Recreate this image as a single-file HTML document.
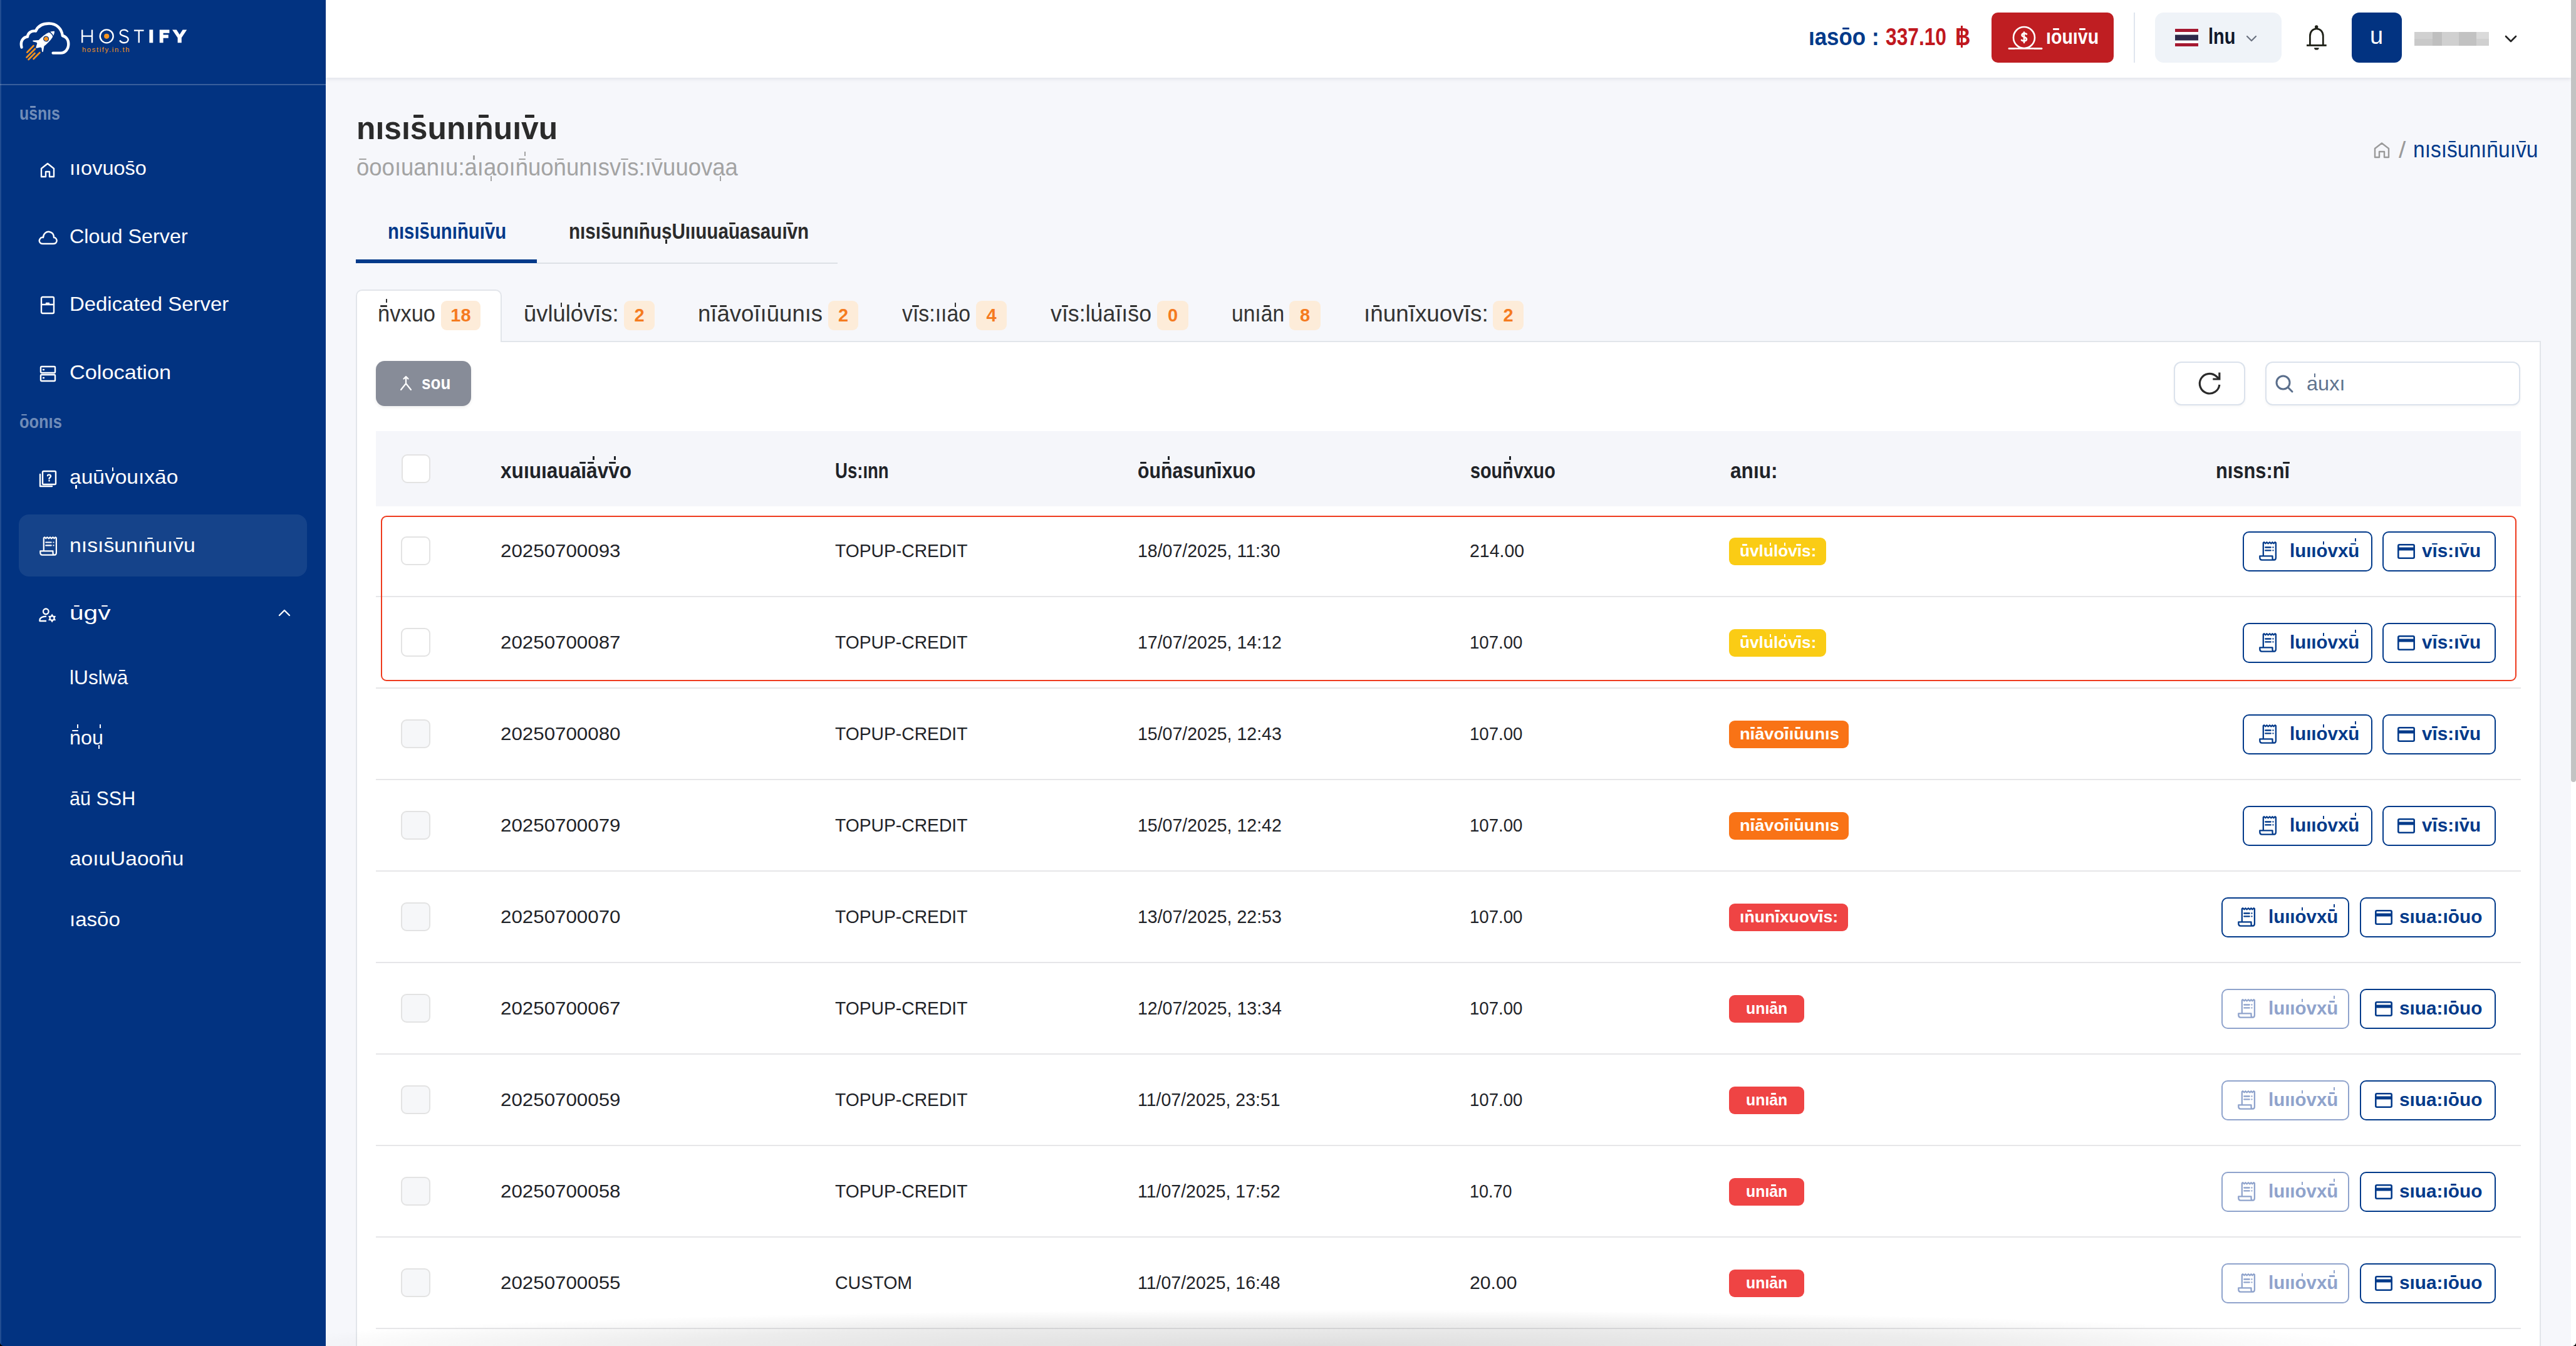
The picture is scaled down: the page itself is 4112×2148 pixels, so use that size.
<!DOCTYPE html>
<html><head><meta charset="utf-8"><title>Hostify - Billing</title>
<style>
html,body{margin:0;padding:0;}
body{width:4112px;height:2148px;overflow:hidden;position:relative;background:#f6f7fb;font-family:"Liberation Sans",sans-serif;}
.t{position:absolute;line-height:1;white-space:pre;transform-origin:0 0;}
.bn{position:absolute;text-align:center;font-size:29px;font-weight:700;}
svg{overflow:visible}
div{box-sizing:border-box}
</style></head><body>
<div style="position:absolute;left:0px;top:0px;width:520px;height:2148px;background:#023381"></div>
<div style="position:absolute;left:0px;top:134px;width:520px;height:2px;background:rgba(255,255,255,0.22)"></div>
<div style="position:absolute;left:520px;top:0px;width:3584px;height:124px;background:#fff;box-shadow:0 2px 6px rgba(30,40,60,0.10)"></div>
<div style="position:absolute;left:4104px;top:0px;width:8px;height:2148px;background:#fff"></div>
<div style="position:absolute;left:4104px;top:0px;width:8px;height:1248px;background:#c3c3c3;border-radius:0 0 4px 4px"></div>
<svg style="position:absolute;left:0px;top:0px;" width="320" height="110" viewBox="0 0 320 110" fill="none">
<path d="M34.5 75.5 C32 66 36.5 59.5 44 58.5 C44.5 52.5 50 48.5 57 49.5 C60.5 41.5 68.5 37.5 78.2 37.5 C90.5 37.5 98.5 46 99.8 57 C105.5 58.5 109.3 63.5 109.3 70 C109.3 78.5 104 84.6 97 84.6 L84.6 84.6" stroke="#fff" stroke-width="4.4" stroke-linecap="round" stroke-linejoin="round"/>
<g transform="translate(72.5,63) rotate(-42)">
<path d="M19.5 0 C13 -7.5 -6 -7.5 -14 -5.5 L-14 5.5 C-6 7.5 13 7.5 19.5 0 Z" fill="#fff"/>
<path d="M12 -5.6 C14 -3 14 3 12 5.6" stroke="#023381" stroke-width="1.4"/>
<circle cx="1.5" cy="0" r="4.6" fill="#023381"/>
<circle cx="1.5" cy="0" r="3.4" fill="#f7931e"/>
<path d="M-9 -5.5 L-16 -11 L-12 -5.5 Z M-9 5.5 L-16 11 L-12 5.5 Z" fill="#fff" stroke="#fff" stroke-width="2" stroke-linejoin="round"/>
<path d="M-14 -3 L-19 0 L-14 3 Z" fill="#fff" stroke="#fff" stroke-width="2" stroke-linejoin="round"/>
</g>
<path d="M43.3 83.5 L53.5 73 M42.5 91.5 L56 78 M45.5 95 L55.5 85 M53.5 94 L63.5 84" stroke="#f7931e" stroke-width="2.6" stroke-linecap="round"/>
<path d="M131.2 47.4 V68.3 M147 47.4 V68.3 M131.2 57.6 H147" stroke="#fff" stroke-width="2.4"/>
<circle cx="170.2" cy="57.85" r="10.5" stroke="#fff" stroke-width="2.4"/>
<circle cx="170.2" cy="57.8" r="4.1" fill="#f7931e"/>
<path d="M204.2 51 C203 48.8 200.5 47.6 198 47.6 C194 47.6 191.8 50 191.8 52.8 C191.8 59 204.7 56 204.7 62.8 C204.7 66 202 68.2 198 68.2 C195 68.2 192.4 66.8 191.2 64.4" stroke="#fff" stroke-width="2.4" stroke-linecap="butt"/>
<path d="M213.9 48.6 H229.6 M221.75 48.6 V68.3" stroke="#fff" stroke-width="2.4"/>
<rect x="238.4" y="47.4" width="5.9" height="20.9" fill="#fff"/>
<path d="M254.7 47.4 H270.4 V52.8 H260.6 V55.6 H268.8 V60.8 H260.6 V68.3 H254.7 Z" fill="#fff"/>
<path d="M275 47.4 H281.8 L286.7 55.2 L291.6 47.4 H298.3 L289.8 60.2 V68.3 H283.6 V60.2 Z" fill="#fff"/>
</svg>
<div class="t" style="left:130.6px;top:74.2px;font-size:11px;letter-spacing:1.6px;color:#f7931e;transform:scaleX(1.0201);">hostify.in.th</div>
<div class="t" style="left:31.0px;top:165.6px;font-size:30px;font-weight:700;color:rgba(255,255,255,0.45);transform:scaleX(0.8269);">usnıs</div><div style="position:absolute;left:48.4px;top:168.7px;width:9.0px;height:2.9px;background:rgba(255,255,255,0.45);border-radius:1px"></div>
<div class="t" style="left:31.0px;top:657.6px;font-size:30px;font-weight:700;color:rgba(255,255,255,0.45);transform:scaleX(0.8481);">oonıs</div><div style="position:absolute;left:34.1px;top:660.6px;width:9.0px;height:2.9px;background:rgba(255,255,255,0.45);border-radius:1px"></div>
<div class="t" style="left:111.0px;top:252.4px;font-size:32px;color:#fff;transform:scaleX(1.0164);">ııovuoso</div><div style="position:absolute;left:203.8px;top:256.5px;width:9.6px;height:2.2px;background:#fff;border-radius:1px"></div>
<div class="t" style="left:111.0px;top:360.9px;font-size:32px;color:#fff;transform:scaleX(1.0106);">Cloud Server</div>
<div class="t" style="left:111.0px;top:468.9px;font-size:32px;color:#fff;transform:scaleX(1.0281);">Dedicated Server</div>
<div class="t" style="left:111.0px;top:577.9px;font-size:32px;color:#fff;transform:scaleX(1.0724);">Colocation</div>
<div class="t" style="left:111.0px;top:745.4px;font-size:32px;color:#fff;transform:scaleX(1.0479);">auuvouıxao</div><div style="position:absolute;left:120.4px;top:773.5px;width:2.2px;height:6.4px;background:#fff"></div><div style="position:absolute;left:153.4px;top:749.5px;width:9.6px;height:2.2px;background:#fff;border-radius:1px"></div><div style="position:absolute;left:178.5px;top:745.6px;width:2.2px;height:6.1px;background:#fff"></div><div style="position:absolute;left:252.9px;top:749.5px;width:9.6px;height:2.2px;background:#fff;border-radius:1px"></div>
<div style="position:absolute;left:30px;top:821px;width:460px;height:99px;background:rgba(255,255,255,0.08);border-radius:16px"></div>
<div class="t" style="left:111.0px;top:853.9px;font-size:32px;color:#fff;transform:scaleX(1.0552);">nısısunınuıvu</div><div style="position:absolute;left:169.5px;top:858.0px;width:9.6px;height:2.2px;background:#fff;border-radius:1px"></div><div style="position:absolute;left:234.9px;top:858.0px;width:9.6px;height:2.2px;background:#fff;border-radius:1px"></div><div style="position:absolute;left:281.4px;top:858.0px;width:9.6px;height:2.2px;background:#fff;border-radius:1px"></div>
<div class="t" style="left:111.0px;top:961.9px;font-size:32px;color:#fff;transform:scaleX(1.2692);">ugv</div><div style="position:absolute;left:117.6px;top:966.0px;width:9.6px;height:2.2px;background:#fff;border-radius:1px"></div><div style="position:absolute;left:162.0px;top:966.0px;width:9.6px;height:2.2px;background:#fff;border-radius:1px"></div>
<div class="t" style="left:111.0px;top:1064.9px;font-size:32px;color:#fff;transform:scaleX(0.9894);">lUslwa</div><div style="position:absolute;left:190.3px;top:1069.0px;width:9.6px;height:2.2px;background:#fff;border-radius:1px"></div>
<div class="t" style="left:111.0px;top:1160.9px;font-size:32px;color:#fff;transform:scaleX(1.0111);">nou</div><div style="position:absolute;left:115.3px;top:1165.0px;width:9.6px;height:2.2px;background:#fff;border-radius:1px"></div><div style="position:absolute;left:122.7px;top:1155.7px;width:2.2px;height:6.1px;background:#fff"></div><div style="position:absolute;left:156.5px;top:1189.0px;width:2.2px;height:6.4px;background:#fff"></div><div style="position:absolute;left:159.1px;top:1155.7px;width:2.2px;height:6.1px;background:#fff"></div>
<div class="t" style="left:111.0px;top:1258.4px;font-size:32px;color:#fff;transform:scaleX(0.9545);">au SSH</div><div style="position:absolute;left:114.8px;top:1262.5px;width:9.6px;height:2.2px;background:#fff;border-radius:1px"></div><div style="position:absolute;left:132.0px;top:1262.5px;width:9.6px;height:2.2px;background:#fff;border-radius:1px"></div>
<div class="t" style="left:111.0px;top:1353.9px;font-size:32px;color:#fff;transform:scaleX(1.0455);">aoıuUaoonu</div><div style="position:absolute;left:262.0px;top:1358.0px;width:9.6px;height:2.2px;background:#fff;border-radius:1px"></div>
<div class="t" style="left:111.0px;top:1450.9px;font-size:32px;color:#fff;transform:scaleX(1.0329);">ıasoo</div><div style="position:absolute;left:159.9px;top:1455.0px;width:9.6px;height:2.2px;background:#fff;border-radius:1px"></div>
<svg style="position:absolute;left:64px;top:259px;" width="24" height="25" viewBox="0 0 24 25" fill="none"><path d="M2 23 V10 L12 2 L22 10 V23 H15 V15 H9 V23 Z" stroke="#fff" stroke-width="2.4" stroke-linecap="round" stroke-linejoin="round"/></svg>
<svg style="position:absolute;left:60px;top:367px;" width="32" height="24" viewBox="0 0 32 24" fill="none"><path d="M8 22 C3 22 1.5 17 4 14 C5 12 7 11.5 9 12 C9 6 14 2 19 3 C24 4 26 8 26 12 C29 12 31 15 30.5 18 C30 20.5 28 22 25 22 Z" stroke="#fff" stroke-width="2.4" stroke-linecap="round" stroke-linejoin="round"/></svg>
<svg style="position:absolute;left:64px;top:472px;" width="24" height="30" viewBox="0 0 24 30" fill="none"><rect x="2" y="2" width="20" height="26" rx="2" stroke="#fff" stroke-width="2.4" stroke-linecap="round" stroke-linejoin="round"/><path d="M2 14 H22 M10 14 V12 H14 V14" stroke="#fff" stroke-width="2.4" stroke-linecap="round" stroke-linejoin="round"/></svg>
<svg style="position:absolute;left:63px;top:583px;" width="27" height="27" viewBox="0 0 27 27" fill="none"><rect x="2" y="2" width="23" height="10" rx="1.5" stroke="#fff" stroke-width="2.4" stroke-linecap="round" stroke-linejoin="round"/><rect x="2" y="15" width="23" height="10" rx="1.5" stroke="#fff" stroke-width="2.4" stroke-linecap="round" stroke-linejoin="round"/><path d="M6 7 H7 M6 20 H7" stroke="#fff" stroke-width="2.4" stroke-linecap="round" stroke-linejoin="round"/></svg>
<svg style="position:absolute;left:61px;top:750px;" width="30" height="29" viewBox="0 0 30 29" fill="none"><rect x="7" y="2" width="21" height="21" rx="1.5" stroke="#fff" stroke-width="2.4" stroke-linecap="round" stroke-linejoin="round"/><path d="M3 7 V26 H22" stroke="#fff" stroke-width="2.4" stroke-linecap="round" stroke-linejoin="round"/><path d="M15 9 C15 7 20 7 20 10 C20 12 17.5 12 17.5 14 M17.5 17 V17.2" stroke="#fff" stroke-width="2.4" stroke-linecap="round" stroke-linejoin="round"/></svg>
<svg style="position:absolute;left:62px;top:855px;" width="30" height="32" viewBox="0 0 30 32" fill="none"><path d="M7.8 24.3 V3.3 L9.2 2.3 L11.2 4.3 L13.4 2.3 L15.6 4.3 L18 2.3 L20.3 4.3 L22.4 2.3 L24.5 4.3 L26.5 2.3 L27.9 3.3 V27 C27.9 29.2 26.6 30.6 25 30.6 C23.4 30.6 22.5 29.2 22.5 27.5 V24.3 H2.3 V27 C2.3 29.2 3.7 30.6 5.5 30.6 H25" stroke="#fff" stroke-width="2.2" stroke-linecap="round" stroke-linejoin="round"/><path d="M11.2 10.5 H19.7 M11.2 15.4 H19.7 M23.4 10.5 H23.5 M23.4 15.4 H23.5" stroke="#fff" stroke-width="2.2" stroke-linecap="round"/></svg>
<svg style="position:absolute;left:55px;top:960px;" width="45" height="40" viewBox="0 0 45 40" fill="none"><circle cx="18.3" cy="15.8" r="4.3" stroke="#fff" stroke-width="2.3"/><path d="M19 23.6 C12.5 23.8 8.4 26 8.4 29.8 V31 H19" stroke="#fff" stroke-width="2.3" stroke-linejoin="round"/><polygon points="28.10,19.60 30.25,22.78 34.08,23.05 32.40,26.50 34.08,29.95 30.25,30.22 28.10,33.40 25.95,30.22 22.12,29.95 23.80,26.50 22.12,23.05 25.95,22.78" fill="#fff"/><circle cx="28.1" cy="26.5" r="2.3" fill="#023381"/></svg>
<svg style="position:absolute;left:444px;top:971px;" width="20" height="14" viewBox="0 0 20 14" fill="none"><path d="M2 11 L10 3 L18 11" stroke="#fff" stroke-width="2.4" stroke-linecap="round" stroke-linejoin="round"/></svg>
<div class="t" style="left:2887.0px;top:39.8px;font-size:38px;font-weight:700;color:#023a8a;transform:scaleX(0.9187);">ıasoo :</div><div style="position:absolute;left:2940.6px;top:43.7px;width:11.4px;height:3.6px;background:#023a8a;border-radius:1px"></div>
<div class="t" style="left:3010.0px;top:39.8px;font-size:38px;font-weight:700;color:#c0181f;transform:scaleX(0.8346);">337.10 </div>
<div class="t" style="left:3121.0px;top:39.8px;font-size:38px;font-weight:700;color:#c0181f;transform:scaleX(0.8889);">B</div>
<div style="position:absolute;left:3130px;top:41px;width:3px;height:35px;background:#c0181f"></div>
<div style="position:absolute;left:3179px;top:20px;width:195px;height:80px;background:#bf1e22;border-radius:10px"></div>
<svg style="position:absolute;left:3204px;top:40px;" width="58" height="40" viewBox="0 0 58 40" fill="none"><circle cx="27" cy="20" r="17" stroke="#fff" stroke-width="2.6"/><path d="M3 37.5 H55" stroke="#fff" stroke-width="2.6" stroke-linecap="round"/><rect x="12" y="37" width="31" height="3" fill="#bf1e22"/><path d="M3 37.5 H55" stroke="#fff" stroke-width="2.6" stroke-linecap="round"/><path d="M31 14.5 C30 13 24 12.5 23.5 16 C23 19.5 31 18.5 31 22.5 C31 26 25 26 23 24 M27 11.5 V28" stroke="#fff" stroke-width="2.6" stroke-linecap="round"/></svg>
<div class="t" style="left:3266.0px;top:41.0px;font-size:34px;font-weight:700;color:#fff;transform:scaleX(0.8400);">ıouıvu</div><div style="position:absolute;left:3277.3px;top:44.5px;width:10.2px;height:3.2px;background:#fff;border-radius:1px"></div><div style="position:absolute;left:3319.3px;top:44.5px;width:10.2px;height:3.2px;background:#fff;border-radius:1px"></div>
<div style="position:absolute;left:3406px;top:20px;width:2px;height:80px;background:#dfe5ef"></div>
<div style="position:absolute;left:3440px;top:20px;width:202px;height:80px;background:#eff3f8;border-radius:14px"></div>
<svg style="position:absolute;left:3472px;top:46px;" width="37" height="28" viewBox="0 0 37 28" fill="none"><rect y="0" width="37" height="28" fill="#fff"/><rect y="0" width="37" height="5" fill="#a51931"/><rect y="23" width="37" height="5" fill="#a51931"/><rect y="9.5" width="37" height="9" fill="#2d2a4a"/></svg>
<div class="t" style="left:3525.0px;top:40.4px;font-size:35px;font-weight:700;color:#0f172a;transform:scaleX(0.8269);">lnu</div>
<svg style="position:absolute;left:3584px;top:54px;" width="20" height="14" viewBox="0 0 20 14" fill="none"><path d="M3 4 L10 11 L17 4" stroke="#6b7280" stroke-width="2.2" stroke-linecap="round" stroke-linejoin="round"/></svg>
<svg style="position:absolute;left:3670px;top:30px;" width="60" height="60" viewBox="0 0 60 60" fill="none"><path d="M17.4 41.5 V27.5 C17.4 20.3 22 15.8 27.8 15.8 C33.6 15.8 38.3 20.3 38.3 27.5 V41.5" stroke="#1f2118" stroke-width="2.8"/><path d="M12 42.4 H43.7" stroke="#1f2118" stroke-width="2.9"/><circle cx="27.7" cy="12.9" r="2.7" fill="#1f2118"/><path d="M24 46.2 H31.7 A3.85 3.4 0 0 1 24 46.2 Z" fill="#1f2118"/></svg>
<div style="position:absolute;left:3754px;top:20px;width:80px;height:80px;background:#023381;border-radius:12px"></div>
<div class="t" style="left:3783.0px;top:37.8px;font-size:38px;color:#fff;">u</div>
<div style="position:absolute;left:3854px;top:51px;width:119px;height:22px;background:#d0d0d0"></div>
<div style="position:absolute;left:3883px;top:51px;width:15px;height:22px;background:#bfbfbf"></div>
<div style="position:absolute;left:3925px;top:51px;width:28px;height:22px;background:#c2c2c2"></div>
<div style="position:absolute;left:3854px;top:62px;width:29px;height:11px;background:#c9c9c9"></div>
<div style="position:absolute;left:3953px;top:51px;width:20px;height:11px;background:#dadada"></div>
<svg style="position:absolute;left:3997px;top:54px;" width="22" height="16" viewBox="0 0 22 16" fill="none"><path d="M3 4 L11 12 L19 4" stroke="#222" stroke-width="2.6" stroke-linecap="round" stroke-linejoin="round"/></svg>
<div class="t" style="left:569.0px;top:178.0px;font-size:52px;font-weight:700;color:#2b2b2b;transform:scaleX(0.9582);">nısısunınuıvu</div><div style="position:absolute;left:660.4px;top:183.3px;width:15.6px;height:4.9px;background:#2b2b2b;border-radius:1px"></div><div style="position:absolute;left:764.3px;top:183.3px;width:15.6px;height:4.9px;background:#2b2b2b;border-radius:1px"></div><div style="position:absolute;left:837.6px;top:183.3px;width:15.6px;height:4.9px;background:#2b2b2b;border-radius:1px"></div>
<div class="t" style="left:569.0px;top:247.8px;font-size:38px;color:#a3a3a3;transform:scaleX(0.9606);">oooıuanıu:aıaoınuonunısvıs:ıvuuovaa</div><div style="position:absolute;left:573.4px;top:252.6px;width:11.4px;height:2.7px;background:#a3a3a3;border-radius:1px"></div><div style="position:absolute;left:755.0px;top:248.1px;width:2.7px;height:7.2px;background:#a3a3a3"></div><div style="position:absolute;left:782.7px;top:281.1px;width:2.7px;height:7.6px;background:#a3a3a3"></div><div style="position:absolute;left:828.0px;top:252.6px;width:11.4px;height:2.7px;background:#a3a3a3;border-radius:1px"></div><div style="position:absolute;left:836.7px;top:241.6px;width:2.7px;height:7.2px;background:#a3a3a3"></div><div style="position:absolute;left:888.5px;top:252.6px;width:11.4px;height:2.7px;background:#a3a3a3;border-radius:1px"></div><div style="position:absolute;left:991.3px;top:252.6px;width:11.4px;height:2.7px;background:#a3a3a3;border-radius:1px"></div><div style="position:absolute;left:1045.1px;top:252.6px;width:11.4px;height:2.7px;background:#a3a3a3;border-radius:1px"></div><div style="position:absolute;left:1148.7px;top:281.1px;width:2.7px;height:7.6px;background:#a3a3a3"></div>
<svg style="position:absolute;left:3788px;top:226px;" width="28" height="27" viewBox="0 0 28 27" fill="none"><path d="M3 25 V11 L14 2.5 L25 11 V25 H18 V16 H10 V25 Z" stroke="#9a9a9a" stroke-width="2.4" stroke-linejoin="round"/></svg>
<div class="t" style="left:3829.0px;top:221.2px;font-size:37px;color:#9a9a9a;transform:scaleX(1.1000);">/</div>
<div class="t" style="left:3852.0px;top:220.2px;font-size:37px;color:#023a8a;transform:scaleX(0.9058);">nısısunınuıvu</div><div style="position:absolute;left:3909.4px;top:224.9px;width:11.1px;height:2.6px;background:#023a8a;border-radius:1px"></div><div style="position:absolute;left:3974.6px;top:224.9px;width:11.1px;height:2.6px;background:#023a8a;border-radius:1px"></div><div style="position:absolute;left:4020.8px;top:224.9px;width:11.1px;height:2.6px;background:#023a8a;border-radius:1px"></div>
<div class="t" style="left:619.0px;top:351.4px;font-size:35px;font-weight:700;color:#023a8a;transform:scaleX(0.8386);">nısısunınuıvu</div><div style="position:absolute;left:672.0px;top:354.9px;width:10.5px;height:3.3px;background:#023a8a;border-radius:1px"></div><div style="position:absolute;left:732.4px;top:354.9px;width:10.5px;height:3.3px;background:#023a8a;border-radius:1px"></div><div style="position:absolute;left:775.2px;top:354.9px;width:10.5px;height:3.3px;background:#023a8a;border-radius:1px"></div>
<div class="t" style="left:908.0px;top:351.4px;font-size:35px;font-weight:700;color:#2b2b2b;transform:scaleX(0.8456);">nısısunınusUııuuauasauıvn</div><div style="position:absolute;left:961.5px;top:354.9px;width:10.5px;height:3.3px;background:#2b2b2b;border-radius:1px"></div><div style="position:absolute;left:1022.4px;top:354.9px;width:10.5px;height:3.3px;background:#2b2b2b;border-radius:1px"></div><div style="position:absolute;left:1062.3px;top:382.1px;width:3.1px;height:7.0px;background:#2b2b2b"></div><div style="position:absolute;left:1163.6px;top:354.9px;width:10.5px;height:3.3px;background:#2b2b2b;border-radius:1px"></div><div style="position:absolute;left:1255.0px;top:354.9px;width:10.5px;height:3.3px;background:#2b2b2b;border-radius:1px"></div>
<div style="position:absolute;left:568px;top:414px;width:289px;height:6px;background:#023a8a"></div>
<div style="position:absolute;left:857px;top:419px;width:480px;height:2px;background:#dde1e6"></div>
<div style="position:absolute;left:568px;top:544px;width:3488px;height:1756px;background:#fff;border:2px solid #e2e5ea;border-bottom:none"></div>
<div style="position:absolute;left:568px;top:462px;width:233px;height:84px;background:#fff;border:2px solid #e2e5ea;border-bottom:none;border-radius:10px 10px 0 0"></div>
<div class="t" style="left:603.0px;top:482.5px;font-size:36px;color:#333;transform:scaleX(0.9583);">nvxuo</div><div style="position:absolute;left:607.2px;top:487.1px;width:10.8px;height:2.5px;background:#333;border-radius:1px"></div><div style="position:absolute;left:615.5px;top:476.6px;width:2.5px;height:6.8px;background:#333"></div>
<div style="position:absolute;left:704px;top:480px;width:63px;height:47px;background:#fdecd9;border-radius:9px"></div>
<div class="bn" style="left:704px;width:63px;top:480px;height:47px;line-height:47px;color:#f57b1f">18</div>
<div class="t" style="left:835.5px;top:482.5px;font-size:36px;color:#333;transform:scaleX(1.0100);">uvlulovıs:</div><div style="position:absolute;left:840.2px;top:487.1px;width:10.8px;height:2.5px;background:#333;border-radius:1px"></div><div style="position:absolute;left:894.9px;top:482.8px;width:2.5px;height:6.8px;background:#333"></div><div style="position:absolute;left:923.2px;top:482.8px;width:2.5px;height:6.8px;background:#333"></div><div style="position:absolute;left:948.3px;top:487.1px;width:10.8px;height:2.5px;background:#333;border-radius:1px"></div>
<div style="position:absolute;left:996px;top:480px;width:49px;height:47px;background:#fdecd9;border-radius:9px"></div>
<div class="bn" style="left:996px;width:49px;top:480px;height:47px;line-height:47px;color:#f57b1f">2</div>
<div class="t" style="left:1114.0px;top:482.5px;font-size:36px;color:#333;transform:scaleX(1.0153);">nıavoııuunıs</div><div style="position:absolute;left:1134.0px;top:487.1px;width:10.8px;height:2.5px;background:#333;border-radius:1px"></div><div style="position:absolute;left:1149.2px;top:487.1px;width:10.8px;height:2.5px;background:#333;border-radius:1px"></div><div style="position:absolute;left:1203.0px;top:487.1px;width:10.8px;height:2.5px;background:#333;border-radius:1px"></div><div style="position:absolute;left:1228.4px;top:487.1px;width:10.8px;height:2.5px;background:#333;border-radius:1px"></div>
<div style="position:absolute;left:1322px;top:480px;width:48px;height:47px;background:#fdecd9;border-radius:9px"></div>
<div class="bn" style="left:1322px;width:48px;top:480px;height:47px;line-height:47px;color:#f57b1f">2</div>
<div class="t" style="left:1440.0px;top:482.5px;font-size:36px;color:#333;transform:scaleX(0.9397);">vıs:ııao</div><div style="position:absolute;left:1456.2px;top:487.1px;width:10.8px;height:2.5px;background:#333;border-radius:1px"></div><div style="position:absolute;left:1523.7px;top:482.8px;width:2.5px;height:6.8px;background:#333"></div>
<div style="position:absolute;left:1558px;top:480px;width:49px;height:47px;background:#fdecd9;border-radius:9px"></div>
<div class="bn" style="left:1558px;width:49px;top:480px;height:47px;line-height:47px;color:#f57b1f">4</div>
<div class="t" style="left:1677.0px;top:482.5px;font-size:36px;color:#333;transform:scaleX(0.9938);">vıs:luaııso</div><div style="position:absolute;left:1694.5px;top:487.1px;width:10.8px;height:2.5px;background:#333;border-radius:1px"></div><div style="position:absolute;left:1753.4px;top:482.8px;width:2.5px;height:6.8px;background:#333"></div><div style="position:absolute;left:1779.9px;top:487.1px;width:10.8px;height:2.5px;background:#333;border-radius:1px"></div><div style="position:absolute;left:1803.8px;top:487.1px;width:10.8px;height:2.5px;background:#333;border-radius:1px"></div>
<div style="position:absolute;left:1847px;top:480px;width:50px;height:47px;background:#fdecd9;border-radius:9px"></div>
<div class="bn" style="left:1847px;width:50px;top:480px;height:47px;line-height:47px;color:#f57b1f">0</div>
<div class="t" style="left:1966.0px;top:482.5px;font-size:36px;color:#333;transform:scaleX(0.9333);">unıan</div><div style="position:absolute;left:2016.6px;top:487.1px;width:10.8px;height:2.5px;background:#333;border-radius:1px"></div>
<div style="position:absolute;left:2058px;top:480px;width:50px;height:47px;background:#fdecd9;border-radius:9px"></div>
<div class="bn" style="left:2058px;width:50px;top:480px;height:47px;line-height:47px;color:#f57b1f">8</div>
<div class="t" style="left:2176.5px;top:482.5px;font-size:36px;color:#333;transform:scaleX(1.0232);">ınunıxuovıs:</div><div style="position:absolute;left:2191.6px;top:487.1px;width:10.8px;height:2.5px;background:#333;border-radius:1px"></div><div style="position:absolute;left:2247.8px;top:487.1px;width:10.8px;height:2.5px;background:#333;border-radius:1px"></div><div style="position:absolute;left:2335.8px;top:487.1px;width:10.8px;height:2.5px;background:#333;border-radius:1px"></div>
<div style="position:absolute;left:2383px;top:480px;width:49px;height:47px;background:#fdecd9;border-radius:9px"></div>
<div class="bn" style="left:2383px;width:49px;top:480px;height:47px;line-height:47px;color:#f57b1f">2</div>
<div style="position:absolute;left:600px;top:576px;width:152px;height:72px;background:#878c98;border-radius:14px;box-shadow:0 2px 5px rgba(0,0,0,0.08)"></div>
<svg style="position:absolute;left:636px;top:598px;" width="24" height="28" viewBox="0 0 24 28" fill="none"><path d="M12 3 V14 L4 24 M12 14 L20 24 M8.5 6.5 L12 3 L15.5 6.5" stroke="#fff" stroke-width="2.2" stroke-linecap="round" stroke-linejoin="round"/></svg>
<div class="t" style="left:673.0px;top:596.4px;font-size:30px;font-weight:700;color:#fff;transform:scaleX(0.8679);">sou</div>
<div style="position:absolute;left:3470px;top:577px;width:114px;height:70px;background:#fff;border:2px solid #dbe2ec;border-radius:12px;box-sizing:border-box;box-shadow:0 2px 4px rgba(0,0,0,0.04)"></div>
<svg style="position:absolute;left:3505.8px;top:590.9px;width:42.1px;height:42.1px" width="24" height="24" viewBox="0 0 24 24" fill="none"><path d="M21 13 a9 9 0 1 1 -3 -7.7 L21 8" stroke="#2b2b2b" stroke-width="1.8" stroke-linecap="butt" stroke-linejoin="miter"/><path d="M21 2 v6 h-6" stroke="#2b2b2b" stroke-width="1.8" stroke-linecap="butt" stroke-linejoin="miter"/></svg>
<div style="position:absolute;left:3616px;top:577px;width:407px;height:70px;background:#fff;border:2px solid #dbe2ec;border-radius:12px;box-sizing:border-box;box-shadow:0 2px 4px rgba(0,0,0,0.04)"></div>
<svg style="position:absolute;left:3631px;top:597px;" width="32" height="32" viewBox="0 0 32 32" fill="none"><circle cx="13.5" cy="13.5" r="10.5" stroke="#5b6f8c" stroke-width="3"/><path d="M21.5 21.5 L28 28" stroke="#5b6f8c" stroke-width="3" stroke-linecap="round"/></svg>
<div class="t" style="left:3682.0px;top:595.5px;font-size:32px;color:#61748f;transform:scaleX(1.0164);">auxı</div><div style="position:absolute;left:3693.7px;top:595.7px;width:2.2px;height:6.1px;background:#61748f"></div>
<div style="position:absolute;left:600px;top:688px;width:3424px;height:120px;background:#f5f6fa"></div>
<div style="position:absolute;left:641px;top:725px;width:46px;height:46px;background:#fff;border:2px solid #e3e3e3;border-radius:9px;box-sizing:border-box"></div>
<div class="t" style="left:799.0px;top:733.4px;font-size:35px;font-weight:700;color:#1f2328;transform:scaleX(0.9035);">xuıuıauaıavvo</div><div style="position:absolute;left:924.8px;top:736.9px;width:10.5px;height:3.3px;background:#1f2328;border-radius:1px"></div><div style="position:absolute;left:937.9px;top:736.9px;width:10.5px;height:3.3px;background:#1f2328;border-radius:1px"></div><div style="position:absolute;left:945.9px;top:727.6px;width:3.1px;height:6.7px;background:#1f2328"></div><div style="position:absolute;left:972.2px;top:736.9px;width:10.5px;height:3.3px;background:#1f2328;border-radius:1px"></div><div style="position:absolute;left:980.2px;top:727.6px;width:3.1px;height:6.7px;background:#1f2328"></div>
<div class="t" style="left:1333.0px;top:733.4px;font-size:35px;font-weight:700;color:#1f2328;transform:scaleX(0.7870);">Us:ınn</div>
<div class="t" style="left:1816.0px;top:733.4px;font-size:35px;font-weight:700;color:#1f2328;transform:scaleX(0.8645);">ounasunıxuo</div><div style="position:absolute;left:1819.8px;top:736.9px;width:10.5px;height:3.3px;background:#1f2328;border-radius:1px"></div><div style="position:absolute;left:1856.1px;top:736.9px;width:10.5px;height:3.3px;background:#1f2328;border-radius:1px"></div><div style="position:absolute;left:1864.2px;top:727.6px;width:3.1px;height:6.7px;background:#1f2328"></div><div style="position:absolute;left:1938.7px;top:736.9px;width:10.5px;height:3.3px;background:#1f2328;border-radius:1px"></div>
<div class="t" style="left:2347.0px;top:733.4px;font-size:35px;font-weight:700;color:#1f2328;transform:scaleX(0.8210);">sounvxuo</div><div style="position:absolute;left:2400.5px;top:736.9px;width:10.5px;height:3.3px;background:#1f2328;border-radius:1px"></div><div style="position:absolute;left:2408.5px;top:727.6px;width:3.1px;height:6.7px;background:#1f2328"></div>
<div class="t" style="left:2762.0px;top:733.4px;font-size:35px;font-weight:700;color:#1f2328;transform:scaleX(0.9036);">anıu:</div>
<div class="t" style="left:3537.0px;top:733.4px;font-size:35px;font-weight:700;color:#1f2328;transform:scaleX(0.8797);">nısns:nı</div><div style="position:absolute;left:3644.4px;top:736.9px;width:10.5px;height:3.3px;background:#1f2328;border-radius:1px"></div>
<div style="position:absolute;left:600px;top:951px;width:3424px;height:2px;background:#e6e6e8"></div>
<div style="position:absolute;left:640px;top:856px;width:47px;height:46px;background:#fff;border:2px solid #e3e3e3;border-radius:9px;box-sizing:border-box"></div>
<div class="t" style="left:799.0px;top:865.3px;font-size:29px;color:#1f2328;transform:scaleX(1.0795);">20250700093</div>
<div class="t" style="left:1333.0px;top:865.3px;font-size:29px;color:#1f2328;transform:scaleX(0.9747);">TOPUP-CREDIT</div>
<div class="t" style="left:1816.0px;top:865.3px;font-size:29px;color:#1f2328;transform:scaleX(0.9826);">18/07/2025, 11:30</div>
<div class="t" style="left:2346.0px;top:865.3px;font-size:29px;color:#1f2328;transform:scaleX(0.9818);">214.00</div>
<div style="position:absolute;left:2760px;top:858px;width:155px;height:44px;background:#facc15;border-radius:9px"></div>
<div class="t" style="left:2777.0px;top:865.5px;font-size:26px;font-weight:700;color:#fff;transform:scaleX(1.0083);">uvlulovıs:</div><div style="position:absolute;left:2781.2px;top:868.1px;width:7.8px;height:2.5px;background:#fff;border-radius:1px"></div><div style="position:absolute;left:2824.5px;top:865.7px;width:2.3px;height:4.9px;background:#fff"></div><div style="position:absolute;left:2847.6px;top:865.7px;width:2.3px;height:4.9px;background:#fff"></div><div style="position:absolute;left:2867.4px;top:868.1px;width:7.8px;height:2.5px;background:#fff;border-radius:1px"></div>
<div style="position:absolute;left:3580px;top:848px;width:207px;height:64px;border:2px solid #023a8a;border-radius:10px;box-sizing:border-box"></div>
<svg style="position:absolute;left:3605px;top:863px;" width="30" height="32" viewBox="0 0 30 32" fill="none"><path d="M7.8 24.3 V3.3 L9.2 2.3 L11.2 4.3 L13.4 2.3 L15.6 4.3 L18 2.3 L20.3 4.3 L22.4 2.3 L24.5 4.3 L26.5 2.3 L27.9 3.3 V27 C27.9 29.2 26.6 30.6 25 30.6 C23.4 30.6 22.5 29.2 22.5 27.5 V24.3 H2.3 V27 C2.3 29.2 3.7 30.6 5.5 30.6 H25" stroke="#023a8a" stroke-width="2.3" stroke-linecap="round" stroke-linejoin="round"/><path d="M11.2 10.5 H19.7 M11.2 15.4 H19.7 M23.4 10.5 H23.5 M23.4 15.4 H23.5" stroke="#023a8a" stroke-width="2.3" stroke-linecap="round"/></svg>
<div class="t" style="left:3655.0px;top:863.6px;font-size:30px;font-weight:700;color:#023a8a;transform:scaleX(0.9821);">luııovxu</div><div style="position:absolute;left:3707.5px;top:863.8px;width:2.7px;height:5.7px;background:#023a8a"></div><div style="position:absolute;left:3751.7px;top:866.6px;width:9.0px;height:2.9px;background:#023a8a;border-radius:1px"></div><div style="position:absolute;left:3758.6px;top:858.7px;width:2.7px;height:5.7px;background:#023a8a"></div>
<div style="position:absolute;left:3803px;top:848px;width:181px;height:64px;border:2px solid #023a8a;border-radius:10px;box-sizing:border-box"></div>
<svg style="position:absolute;left:3827px;top:868px;" width="28" height="24" viewBox="0 0 28 24" fill="none"><rect x="1.3" y="1.3" width="25.4" height="21.4" rx="2" stroke="#023a8a" stroke-width="2.6"/><rect x="1" y="5.5" width="26" height="5" fill="#023a8a"/></svg>
<div class="t" style="left:3866.0px;top:863.6px;font-size:30px;font-weight:700;color:#023a8a;transform:scaleX(0.9895);">vıs:ıvu</div><div style="position:absolute;left:3882.3px;top:866.6px;width:9.0px;height:2.9px;background:#023a8a;border-radius:1px"></div><div style="position:absolute;left:3929.3px;top:866.6px;width:9.0px;height:2.9px;background:#023a8a;border-radius:1px"></div>
<div style="position:absolute;left:600px;top:1097px;width:3424px;height:2px;background:#e6e6e8"></div>
<div style="position:absolute;left:640px;top:1002px;width:47px;height:46px;background:#fff;border:2px solid #e3e3e3;border-radius:9px;box-sizing:border-box"></div>
<div class="t" style="left:799.0px;top:1011.3px;font-size:29px;color:#1f2328;transform:scaleX(1.0795);">20250700087</div>
<div class="t" style="left:1333.0px;top:1011.3px;font-size:29px;color:#1f2328;transform:scaleX(0.9747);">TOPUP-CREDIT</div>
<div class="t" style="left:1816.0px;top:1011.3px;font-size:29px;color:#1f2328;transform:scaleX(0.9826);">17/07/2025, 14:12</div>
<div class="t" style="left:2346.0px;top:1011.3px;font-size:29px;color:#1f2328;transform:scaleX(0.9523);">107.00</div>
<div style="position:absolute;left:2760px;top:1004px;width:155px;height:44px;background:#facc15;border-radius:9px"></div>
<div class="t" style="left:2777.0px;top:1011.5px;font-size:26px;font-weight:700;color:#fff;transform:scaleX(1.0083);">uvlulovıs:</div><div style="position:absolute;left:2781.2px;top:1014.1px;width:7.8px;height:2.5px;background:#fff;border-radius:1px"></div><div style="position:absolute;left:2824.5px;top:1011.7px;width:2.3px;height:4.9px;background:#fff"></div><div style="position:absolute;left:2847.6px;top:1011.7px;width:2.3px;height:4.9px;background:#fff"></div><div style="position:absolute;left:2867.4px;top:1014.1px;width:7.8px;height:2.5px;background:#fff;border-radius:1px"></div>
<div style="position:absolute;left:3580px;top:994px;width:207px;height:64px;border:2px solid #023a8a;border-radius:10px;box-sizing:border-box"></div>
<svg style="position:absolute;left:3605px;top:1009px;" width="30" height="32" viewBox="0 0 30 32" fill="none"><path d="M7.8 24.3 V3.3 L9.2 2.3 L11.2 4.3 L13.4 2.3 L15.6 4.3 L18 2.3 L20.3 4.3 L22.4 2.3 L24.5 4.3 L26.5 2.3 L27.9 3.3 V27 C27.9 29.2 26.6 30.6 25 30.6 C23.4 30.6 22.5 29.2 22.5 27.5 V24.3 H2.3 V27 C2.3 29.2 3.7 30.6 5.5 30.6 H25" stroke="#023a8a" stroke-width="2.3" stroke-linecap="round" stroke-linejoin="round"/><path d="M11.2 10.5 H19.7 M11.2 15.4 H19.7 M23.4 10.5 H23.5 M23.4 15.4 H23.5" stroke="#023a8a" stroke-width="2.3" stroke-linecap="round"/></svg>
<div class="t" style="left:3655.0px;top:1009.6px;font-size:30px;font-weight:700;color:#023a8a;transform:scaleX(0.9821);">luııovxu</div><div style="position:absolute;left:3707.5px;top:1009.8px;width:2.7px;height:5.7px;background:#023a8a"></div><div style="position:absolute;left:3751.7px;top:1012.6px;width:9.0px;height:2.9px;background:#023a8a;border-radius:1px"></div><div style="position:absolute;left:3758.6px;top:1004.7px;width:2.7px;height:5.7px;background:#023a8a"></div>
<div style="position:absolute;left:3803px;top:994px;width:181px;height:64px;border:2px solid #023a8a;border-radius:10px;box-sizing:border-box"></div>
<svg style="position:absolute;left:3827px;top:1014px;" width="28" height="24" viewBox="0 0 28 24" fill="none"><rect x="1.3" y="1.3" width="25.4" height="21.4" rx="2" stroke="#023a8a" stroke-width="2.6"/><rect x="1" y="5.5" width="26" height="5" fill="#023a8a"/></svg>
<div class="t" style="left:3866.0px;top:1009.6px;font-size:30px;font-weight:700;color:#023a8a;transform:scaleX(0.9895);">vıs:ıvu</div><div style="position:absolute;left:3882.3px;top:1012.6px;width:9.0px;height:2.9px;background:#023a8a;border-radius:1px"></div><div style="position:absolute;left:3929.3px;top:1012.6px;width:9.0px;height:2.9px;background:#023a8a;border-radius:1px"></div>
<div style="position:absolute;left:600px;top:1243px;width:3424px;height:2px;background:#e6e6e8"></div>
<div style="position:absolute;left:640px;top:1148px;width:47px;height:46px;background:#f6f7f9;border:2px solid #e3e3e3;border-radius:9px;box-sizing:border-box"></div>
<div class="t" style="left:799.0px;top:1157.3px;font-size:29px;color:#1f2328;transform:scaleX(1.0795);">20250700080</div>
<div class="t" style="left:1333.0px;top:1157.3px;font-size:29px;color:#1f2328;transform:scaleX(0.9747);">TOPUP-CREDIT</div>
<div class="t" style="left:1816.0px;top:1157.3px;font-size:29px;color:#1f2328;transform:scaleX(0.9826);">15/07/2025, 12:43</div>
<div class="t" style="left:2346.0px;top:1157.3px;font-size:29px;color:#1f2328;transform:scaleX(0.9523);">107.00</div>
<div style="position:absolute;left:2760px;top:1150px;width:191px;height:44px;background:#f97316;border-radius:9px"></div>
<div class="t" style="left:2777.0px;top:1157.5px;font-size:26px;font-weight:700;color:#fff;transform:scaleX(1.0467);">nıavoııuunıs</div><div style="position:absolute;left:2793.5px;top:1160.1px;width:7.8px;height:2.5px;background:#fff;border-radius:1px"></div><div style="position:absolute;left:2804.5px;top:1160.1px;width:7.8px;height:2.5px;background:#fff;border-radius:1px"></div><div style="position:absolute;left:2846.9px;top:1160.1px;width:7.8px;height:2.5px;background:#fff;border-radius:1px"></div><div style="position:absolute;left:2866.3px;top:1160.1px;width:7.8px;height:2.5px;background:#fff;border-radius:1px"></div>
<div style="position:absolute;left:3580px;top:1140px;width:207px;height:64px;border:2px solid #023a8a;border-radius:10px;box-sizing:border-box"></div>
<svg style="position:absolute;left:3605px;top:1155px;" width="30" height="32" viewBox="0 0 30 32" fill="none"><path d="M7.8 24.3 V3.3 L9.2 2.3 L11.2 4.3 L13.4 2.3 L15.6 4.3 L18 2.3 L20.3 4.3 L22.4 2.3 L24.5 4.3 L26.5 2.3 L27.9 3.3 V27 C27.9 29.2 26.6 30.6 25 30.6 C23.4 30.6 22.5 29.2 22.5 27.5 V24.3 H2.3 V27 C2.3 29.2 3.7 30.6 5.5 30.6 H25" stroke="#023a8a" stroke-width="2.3" stroke-linecap="round" stroke-linejoin="round"/><path d="M11.2 10.5 H19.7 M11.2 15.4 H19.7 M23.4 10.5 H23.5 M23.4 15.4 H23.5" stroke="#023a8a" stroke-width="2.3" stroke-linecap="round"/></svg>
<div class="t" style="left:3655.0px;top:1155.6px;font-size:30px;font-weight:700;color:#023a8a;transform:scaleX(0.9821);">luııovxu</div><div style="position:absolute;left:3707.5px;top:1155.8px;width:2.7px;height:5.7px;background:#023a8a"></div><div style="position:absolute;left:3751.7px;top:1158.7px;width:9.0px;height:2.9px;background:#023a8a;border-radius:1px"></div><div style="position:absolute;left:3758.6px;top:1150.7px;width:2.7px;height:5.7px;background:#023a8a"></div>
<div style="position:absolute;left:3803px;top:1140px;width:181px;height:64px;border:2px solid #023a8a;border-radius:10px;box-sizing:border-box"></div>
<svg style="position:absolute;left:3827px;top:1160px;" width="28" height="24" viewBox="0 0 28 24" fill="none"><rect x="1.3" y="1.3" width="25.4" height="21.4" rx="2" stroke="#023a8a" stroke-width="2.6"/><rect x="1" y="5.5" width="26" height="5" fill="#023a8a"/></svg>
<div class="t" style="left:3866.0px;top:1155.6px;font-size:30px;font-weight:700;color:#023a8a;transform:scaleX(0.9895);">vıs:ıvu</div><div style="position:absolute;left:3882.3px;top:1158.7px;width:9.0px;height:2.9px;background:#023a8a;border-radius:1px"></div><div style="position:absolute;left:3929.3px;top:1158.7px;width:9.0px;height:2.9px;background:#023a8a;border-radius:1px"></div>
<div style="position:absolute;left:600px;top:1389px;width:3424px;height:2px;background:#e6e6e8"></div>
<div style="position:absolute;left:640px;top:1294px;width:47px;height:46px;background:#f6f7f9;border:2px solid #e3e3e3;border-radius:9px;box-sizing:border-box"></div>
<div class="t" style="left:799.0px;top:1303.3px;font-size:29px;color:#1f2328;transform:scaleX(1.0795);">20250700079</div>
<div class="t" style="left:1333.0px;top:1303.3px;font-size:29px;color:#1f2328;transform:scaleX(0.9747);">TOPUP-CREDIT</div>
<div class="t" style="left:1816.0px;top:1303.3px;font-size:29px;color:#1f2328;transform:scaleX(0.9826);">15/07/2025, 12:42</div>
<div class="t" style="left:2346.0px;top:1303.3px;font-size:29px;color:#1f2328;transform:scaleX(0.9523);">107.00</div>
<div style="position:absolute;left:2760px;top:1296px;width:191px;height:44px;background:#f97316;border-radius:9px"></div>
<div class="t" style="left:2777.0px;top:1303.5px;font-size:26px;font-weight:700;color:#fff;transform:scaleX(1.0467);">nıavoııuunıs</div><div style="position:absolute;left:2793.5px;top:1306.1px;width:7.8px;height:2.5px;background:#fff;border-radius:1px"></div><div style="position:absolute;left:2804.5px;top:1306.1px;width:7.8px;height:2.5px;background:#fff;border-radius:1px"></div><div style="position:absolute;left:2846.9px;top:1306.1px;width:7.8px;height:2.5px;background:#fff;border-radius:1px"></div><div style="position:absolute;left:2866.3px;top:1306.1px;width:7.8px;height:2.5px;background:#fff;border-radius:1px"></div>
<div style="position:absolute;left:3580px;top:1286px;width:207px;height:64px;border:2px solid #023a8a;border-radius:10px;box-sizing:border-box"></div>
<svg style="position:absolute;left:3605px;top:1301px;" width="30" height="32" viewBox="0 0 30 32" fill="none"><path d="M7.8 24.3 V3.3 L9.2 2.3 L11.2 4.3 L13.4 2.3 L15.6 4.3 L18 2.3 L20.3 4.3 L22.4 2.3 L24.5 4.3 L26.5 2.3 L27.9 3.3 V27 C27.9 29.2 26.6 30.6 25 30.6 C23.4 30.6 22.5 29.2 22.5 27.5 V24.3 H2.3 V27 C2.3 29.2 3.7 30.6 5.5 30.6 H25" stroke="#023a8a" stroke-width="2.3" stroke-linecap="round" stroke-linejoin="round"/><path d="M11.2 10.5 H19.7 M11.2 15.4 H19.7 M23.4 10.5 H23.5 M23.4 15.4 H23.5" stroke="#023a8a" stroke-width="2.3" stroke-linecap="round"/></svg>
<div class="t" style="left:3655.0px;top:1301.6px;font-size:30px;font-weight:700;color:#023a8a;transform:scaleX(0.9821);">luııovxu</div><div style="position:absolute;left:3707.5px;top:1301.8px;width:2.7px;height:5.7px;background:#023a8a"></div><div style="position:absolute;left:3751.7px;top:1304.7px;width:9.0px;height:2.9px;background:#023a8a;border-radius:1px"></div><div style="position:absolute;left:3758.6px;top:1296.7px;width:2.7px;height:5.7px;background:#023a8a"></div>
<div style="position:absolute;left:3803px;top:1286px;width:181px;height:64px;border:2px solid #023a8a;border-radius:10px;box-sizing:border-box"></div>
<svg style="position:absolute;left:3827px;top:1306px;" width="28" height="24" viewBox="0 0 28 24" fill="none"><rect x="1.3" y="1.3" width="25.4" height="21.4" rx="2" stroke="#023a8a" stroke-width="2.6"/><rect x="1" y="5.5" width="26" height="5" fill="#023a8a"/></svg>
<div class="t" style="left:3866.0px;top:1301.6px;font-size:30px;font-weight:700;color:#023a8a;transform:scaleX(0.9895);">vıs:ıvu</div><div style="position:absolute;left:3882.3px;top:1304.7px;width:9.0px;height:2.9px;background:#023a8a;border-radius:1px"></div><div style="position:absolute;left:3929.3px;top:1304.7px;width:9.0px;height:2.9px;background:#023a8a;border-radius:1px"></div>
<div style="position:absolute;left:600px;top:1535px;width:3424px;height:2px;background:#e6e6e8"></div>
<div style="position:absolute;left:640px;top:1440px;width:47px;height:46px;background:#f6f7f9;border:2px solid #e3e3e3;border-radius:9px;box-sizing:border-box"></div>
<div class="t" style="left:799.0px;top:1449.3px;font-size:29px;color:#1f2328;transform:scaleX(1.0795);">20250700070</div>
<div class="t" style="left:1333.0px;top:1449.3px;font-size:29px;color:#1f2328;transform:scaleX(0.9747);">TOPUP-CREDIT</div>
<div class="t" style="left:1816.0px;top:1449.3px;font-size:29px;color:#1f2328;transform:scaleX(0.9826);">13/07/2025, 22:53</div>
<div class="t" style="left:2346.0px;top:1449.3px;font-size:29px;color:#1f2328;transform:scaleX(0.9523);">107.00</div>
<div style="position:absolute;left:2760px;top:1442px;width:190px;height:44px;background:#ef4444;border-radius:9px"></div>
<div class="t" style="left:2777.0px;top:1449.5px;font-size:26px;font-weight:700;color:#fff;transform:scaleX(1.0263);">ınunıxuovıs:</div><div style="position:absolute;left:2788.5px;top:1452.1px;width:7.8px;height:2.5px;background:#fff;border-radius:1px"></div><div style="position:absolute;left:2833.1px;top:1452.1px;width:7.8px;height:2.5px;background:#fff;border-radius:1px"></div><div style="position:absolute;left:2901.9px;top:1452.1px;width:7.8px;height:2.5px;background:#fff;border-radius:1px"></div>
<div style="position:absolute;left:3546px;top:1432px;width:204px;height:64px;border:2px solid #023a8a;border-radius:10px;box-sizing:border-box"></div>
<svg style="position:absolute;left:3571px;top:1447px;" width="30" height="32" viewBox="0 0 30 32" fill="none"><path d="M7.8 24.3 V3.3 L9.2 2.3 L11.2 4.3 L13.4 2.3 L15.6 4.3 L18 2.3 L20.3 4.3 L22.4 2.3 L24.5 4.3 L26.5 2.3 L27.9 3.3 V27 C27.9 29.2 26.6 30.6 25 30.6 C23.4 30.6 22.5 29.2 22.5 27.5 V24.3 H2.3 V27 C2.3 29.2 3.7 30.6 5.5 30.6 H25" stroke="#023a8a" stroke-width="2.3" stroke-linecap="round" stroke-linejoin="round"/><path d="M11.2 10.5 H19.7 M11.2 15.4 H19.7 M23.4 10.5 H23.5 M23.4 15.4 H23.5" stroke="#023a8a" stroke-width="2.3" stroke-linecap="round"/></svg>
<div class="t" style="left:3621.0px;top:1447.6px;font-size:30px;font-weight:700;color:#023a8a;transform:scaleX(0.9821);">luııovxu</div><div style="position:absolute;left:3673.5px;top:1447.8px;width:2.7px;height:5.7px;background:#023a8a"></div><div style="position:absolute;left:3717.7px;top:1450.7px;width:9.0px;height:2.9px;background:#023a8a;border-radius:1px"></div><div style="position:absolute;left:3724.6px;top:1442.7px;width:2.7px;height:5.7px;background:#023a8a"></div>
<div style="position:absolute;left:3767px;top:1432px;width:217px;height:64px;border:2px solid #023a8a;border-radius:10px;box-sizing:border-box"></div>
<svg style="position:absolute;left:3791px;top:1452px;" width="28" height="24" viewBox="0 0 28 24" fill="none"><rect x="1.3" y="1.3" width="25.4" height="21.4" rx="2" stroke="#023a8a" stroke-width="2.6"/><rect x="1" y="5.5" width="26" height="5" fill="#023a8a"/></svg>
<div class="t" style="left:3830.0px;top:1447.6px;font-size:30px;font-weight:700;color:#023a8a;transform:scaleX(0.9924);">sıua:ıouo</div><div style="position:absolute;left:3911.8px;top:1450.7px;width:9.0px;height:2.9px;background:#023a8a;border-radius:1px"></div>
<div style="position:absolute;left:600px;top:1681px;width:3424px;height:2px;background:#e6e6e8"></div>
<div style="position:absolute;left:640px;top:1586px;width:47px;height:46px;background:#f6f7f9;border:2px solid #e3e3e3;border-radius:9px;box-sizing:border-box"></div>
<div class="t" style="left:799.0px;top:1595.3px;font-size:29px;color:#1f2328;transform:scaleX(1.0795);">20250700067</div>
<div class="t" style="left:1333.0px;top:1595.3px;font-size:29px;color:#1f2328;transform:scaleX(0.9747);">TOPUP-CREDIT</div>
<div class="t" style="left:1816.0px;top:1595.3px;font-size:29px;color:#1f2328;transform:scaleX(0.9826);">12/07/2025, 13:34</div>
<div class="t" style="left:2346.0px;top:1595.3px;font-size:29px;color:#1f2328;transform:scaleX(0.9523);">107.00</div>
<div style="position:absolute;left:2760px;top:1588px;width:120px;height:44px;background:#ef4444;border-radius:9px"></div>
<div class="t" style="left:2787.0px;top:1595.5px;font-size:26px;font-weight:700;color:#fff;transform:scaleX(0.9565);">unıan</div><div style="position:absolute;left:2827.1px;top:1598.1px;width:7.8px;height:2.5px;background:#fff;border-radius:1px"></div>
<div style="position:absolute;left:3546px;top:1578px;width:204px;height:64px;border:2px solid #8fa3cc;border-radius:10px;box-sizing:border-box"></div>
<svg style="position:absolute;left:3571px;top:1593px;" width="30" height="32" viewBox="0 0 30 32" fill="none"><path d="M7.8 24.3 V3.3 L9.2 2.3 L11.2 4.3 L13.4 2.3 L15.6 4.3 L18 2.3 L20.3 4.3 L22.4 2.3 L24.5 4.3 L26.5 2.3 L27.9 3.3 V27 C27.9 29.2 26.6 30.6 25 30.6 C23.4 30.6 22.5 29.2 22.5 27.5 V24.3 H2.3 V27 C2.3 29.2 3.7 30.6 5.5 30.6 H25" stroke="#8fa3cc" stroke-width="2.3" stroke-linecap="round" stroke-linejoin="round"/><path d="M11.2 10.5 H19.7 M11.2 15.4 H19.7 M23.4 10.5 H23.5 M23.4 15.4 H23.5" stroke="#8fa3cc" stroke-width="2.3" stroke-linecap="round"/></svg>
<div class="t" style="left:3621.0px;top:1593.6px;font-size:30px;font-weight:700;color:#8fa3cc;transform:scaleX(0.9821);">luııovxu</div><div style="position:absolute;left:3673.5px;top:1593.8px;width:2.7px;height:5.7px;background:#8fa3cc"></div><div style="position:absolute;left:3717.7px;top:1596.7px;width:9.0px;height:2.9px;background:#8fa3cc;border-radius:1px"></div><div style="position:absolute;left:3724.6px;top:1588.7px;width:2.7px;height:5.7px;background:#8fa3cc"></div>
<div style="position:absolute;left:3767px;top:1578px;width:217px;height:64px;border:2px solid #023a8a;border-radius:10px;box-sizing:border-box"></div>
<svg style="position:absolute;left:3791px;top:1598px;" width="28" height="24" viewBox="0 0 28 24" fill="none"><rect x="1.3" y="1.3" width="25.4" height="21.4" rx="2" stroke="#023a8a" stroke-width="2.6"/><rect x="1" y="5.5" width="26" height="5" fill="#023a8a"/></svg>
<div class="t" style="left:3830.0px;top:1593.6px;font-size:30px;font-weight:700;color:#023a8a;transform:scaleX(0.9924);">sıua:ıouo</div><div style="position:absolute;left:3911.8px;top:1596.7px;width:9.0px;height:2.9px;background:#023a8a;border-radius:1px"></div>
<div style="position:absolute;left:600px;top:1827px;width:3424px;height:2px;background:#e6e6e8"></div>
<div style="position:absolute;left:640px;top:1732px;width:47px;height:46px;background:#f6f7f9;border:2px solid #e3e3e3;border-radius:9px;box-sizing:border-box"></div>
<div class="t" style="left:799.0px;top:1741.3px;font-size:29px;color:#1f2328;transform:scaleX(1.0795);">20250700059</div>
<div class="t" style="left:1333.0px;top:1741.3px;font-size:29px;color:#1f2328;transform:scaleX(0.9747);">TOPUP-CREDIT</div>
<div class="t" style="left:1816.0px;top:1741.3px;font-size:29px;color:#1f2328;transform:scaleX(0.9826);">11/07/2025, 23:51</div>
<div class="t" style="left:2346.0px;top:1741.3px;font-size:29px;color:#1f2328;transform:scaleX(0.9523);">107.00</div>
<div style="position:absolute;left:2760px;top:1734px;width:120px;height:44px;background:#ef4444;border-radius:9px"></div>
<div class="t" style="left:2787.0px;top:1741.5px;font-size:26px;font-weight:700;color:#fff;transform:scaleX(0.9565);">unıan</div><div style="position:absolute;left:2827.1px;top:1744.1px;width:7.8px;height:2.5px;background:#fff;border-radius:1px"></div>
<div style="position:absolute;left:3546px;top:1724px;width:204px;height:64px;border:2px solid #8fa3cc;border-radius:10px;box-sizing:border-box"></div>
<svg style="position:absolute;left:3571px;top:1739px;" width="30" height="32" viewBox="0 0 30 32" fill="none"><path d="M7.8 24.3 V3.3 L9.2 2.3 L11.2 4.3 L13.4 2.3 L15.6 4.3 L18 2.3 L20.3 4.3 L22.4 2.3 L24.5 4.3 L26.5 2.3 L27.9 3.3 V27 C27.9 29.2 26.6 30.6 25 30.6 C23.4 30.6 22.5 29.2 22.5 27.5 V24.3 H2.3 V27 C2.3 29.2 3.7 30.6 5.5 30.6 H25" stroke="#8fa3cc" stroke-width="2.3" stroke-linecap="round" stroke-linejoin="round"/><path d="M11.2 10.5 H19.7 M11.2 15.4 H19.7 M23.4 10.5 H23.5 M23.4 15.4 H23.5" stroke="#8fa3cc" stroke-width="2.3" stroke-linecap="round"/></svg>
<div class="t" style="left:3621.0px;top:1739.6px;font-size:30px;font-weight:700;color:#8fa3cc;transform:scaleX(0.9821);">luııovxu</div><div style="position:absolute;left:3673.5px;top:1739.8px;width:2.7px;height:5.7px;background:#8fa3cc"></div><div style="position:absolute;left:3717.7px;top:1742.7px;width:9.0px;height:2.9px;background:#8fa3cc;border-radius:1px"></div><div style="position:absolute;left:3724.6px;top:1734.7px;width:2.7px;height:5.7px;background:#8fa3cc"></div>
<div style="position:absolute;left:3767px;top:1724px;width:217px;height:64px;border:2px solid #023a8a;border-radius:10px;box-sizing:border-box"></div>
<svg style="position:absolute;left:3791px;top:1744px;" width="28" height="24" viewBox="0 0 28 24" fill="none"><rect x="1.3" y="1.3" width="25.4" height="21.4" rx="2" stroke="#023a8a" stroke-width="2.6"/><rect x="1" y="5.5" width="26" height="5" fill="#023a8a"/></svg>
<div class="t" style="left:3830.0px;top:1739.6px;font-size:30px;font-weight:700;color:#023a8a;transform:scaleX(0.9924);">sıua:ıouo</div><div style="position:absolute;left:3911.8px;top:1742.7px;width:9.0px;height:2.9px;background:#023a8a;border-radius:1px"></div>
<div style="position:absolute;left:600px;top:1973px;width:3424px;height:2px;background:#e6e6e8"></div>
<div style="position:absolute;left:640px;top:1878px;width:47px;height:46px;background:#f6f7f9;border:2px solid #e3e3e3;border-radius:9px;box-sizing:border-box"></div>
<div class="t" style="left:799.0px;top:1887.3px;font-size:29px;color:#1f2328;transform:scaleX(1.0795);">20250700058</div>
<div class="t" style="left:1333.0px;top:1887.3px;font-size:29px;color:#1f2328;transform:scaleX(0.9747);">TOPUP-CREDIT</div>
<div class="t" style="left:1816.0px;top:1887.3px;font-size:29px;color:#1f2328;transform:scaleX(0.9826);">11/07/2025, 17:52</div>
<div class="t" style="left:2346.0px;top:1887.3px;font-size:29px;color:#1f2328;transform:scaleX(0.9306);">10.70</div>
<div style="position:absolute;left:2760px;top:1880px;width:120px;height:44px;background:#ef4444;border-radius:9px"></div>
<div class="t" style="left:2787.0px;top:1887.5px;font-size:26px;font-weight:700;color:#fff;transform:scaleX(0.9565);">unıan</div><div style="position:absolute;left:2827.1px;top:1890.1px;width:7.8px;height:2.5px;background:#fff;border-radius:1px"></div>
<div style="position:absolute;left:3546px;top:1870px;width:204px;height:64px;border:2px solid #8fa3cc;border-radius:10px;box-sizing:border-box"></div>
<svg style="position:absolute;left:3571px;top:1885px;" width="30" height="32" viewBox="0 0 30 32" fill="none"><path d="M7.8 24.3 V3.3 L9.2 2.3 L11.2 4.3 L13.4 2.3 L15.6 4.3 L18 2.3 L20.3 4.3 L22.4 2.3 L24.5 4.3 L26.5 2.3 L27.9 3.3 V27 C27.9 29.2 26.6 30.6 25 30.6 C23.4 30.6 22.5 29.2 22.5 27.5 V24.3 H2.3 V27 C2.3 29.2 3.7 30.6 5.5 30.6 H25" stroke="#8fa3cc" stroke-width="2.3" stroke-linecap="round" stroke-linejoin="round"/><path d="M11.2 10.5 H19.7 M11.2 15.4 H19.7 M23.4 10.5 H23.5 M23.4 15.4 H23.5" stroke="#8fa3cc" stroke-width="2.3" stroke-linecap="round"/></svg>
<div class="t" style="left:3621.0px;top:1885.6px;font-size:30px;font-weight:700;color:#8fa3cc;transform:scaleX(0.9821);">luııovxu</div><div style="position:absolute;left:3673.5px;top:1885.8px;width:2.7px;height:5.7px;background:#8fa3cc"></div><div style="position:absolute;left:3717.7px;top:1888.7px;width:9.0px;height:2.9px;background:#8fa3cc;border-radius:1px"></div><div style="position:absolute;left:3724.6px;top:1880.7px;width:2.7px;height:5.7px;background:#8fa3cc"></div>
<div style="position:absolute;left:3767px;top:1870px;width:217px;height:64px;border:2px solid #023a8a;border-radius:10px;box-sizing:border-box"></div>
<svg style="position:absolute;left:3791px;top:1890px;" width="28" height="24" viewBox="0 0 28 24" fill="none"><rect x="1.3" y="1.3" width="25.4" height="21.4" rx="2" stroke="#023a8a" stroke-width="2.6"/><rect x="1" y="5.5" width="26" height="5" fill="#023a8a"/></svg>
<div class="t" style="left:3830.0px;top:1885.6px;font-size:30px;font-weight:700;color:#023a8a;transform:scaleX(0.9924);">sıua:ıouo</div><div style="position:absolute;left:3911.8px;top:1888.7px;width:9.0px;height:2.9px;background:#023a8a;border-radius:1px"></div>
<div style="position:absolute;left:600px;top:2119px;width:3424px;height:2px;background:#e6e6e8"></div>
<div style="position:absolute;left:640px;top:2024px;width:47px;height:46px;background:#f6f7f9;border:2px solid #e3e3e3;border-radius:9px;box-sizing:border-box"></div>
<div class="t" style="left:799.0px;top:2033.3px;font-size:29px;color:#1f2328;transform:scaleX(1.0795);">20250700055</div>
<div class="t" style="left:1333.0px;top:2033.3px;font-size:29px;color:#1f2328;transform:scaleX(0.9840);">CUSTOM</div>
<div class="t" style="left:1816.0px;top:2033.3px;font-size:29px;color:#1f2328;transform:scaleX(0.9826);">11/07/2025, 16:48</div>
<div class="t" style="left:2346.0px;top:2033.3px;font-size:29px;color:#1f2328;transform:scaleX(1.0417);">20.00</div>
<div style="position:absolute;left:2760px;top:2026px;width:120px;height:44px;background:#ef4444;border-radius:9px"></div>
<div class="t" style="left:2787.0px;top:2033.5px;font-size:26px;font-weight:700;color:#fff;transform:scaleX(0.9565);">unıan</div><div style="position:absolute;left:2827.1px;top:2036.1px;width:7.8px;height:2.5px;background:#fff;border-radius:1px"></div>
<div style="position:absolute;left:3546px;top:2016px;width:204px;height:64px;border:2px solid #8fa3cc;border-radius:10px;box-sizing:border-box"></div>
<svg style="position:absolute;left:3571px;top:2031px;" width="30" height="32" viewBox="0 0 30 32" fill="none"><path d="M7.8 24.3 V3.3 L9.2 2.3 L11.2 4.3 L13.4 2.3 L15.6 4.3 L18 2.3 L20.3 4.3 L22.4 2.3 L24.5 4.3 L26.5 2.3 L27.9 3.3 V27 C27.9 29.2 26.6 30.6 25 30.6 C23.4 30.6 22.5 29.2 22.5 27.5 V24.3 H2.3 V27 C2.3 29.2 3.7 30.6 5.5 30.6 H25" stroke="#8fa3cc" stroke-width="2.3" stroke-linecap="round" stroke-linejoin="round"/><path d="M11.2 10.5 H19.7 M11.2 15.4 H19.7 M23.4 10.5 H23.5 M23.4 15.4 H23.5" stroke="#8fa3cc" stroke-width="2.3" stroke-linecap="round"/></svg>
<div class="t" style="left:3621.0px;top:2031.6px;font-size:30px;font-weight:700;color:#8fa3cc;transform:scaleX(0.9821);">luııovxu</div><div style="position:absolute;left:3673.5px;top:2031.8px;width:2.7px;height:5.7px;background:#8fa3cc"></div><div style="position:absolute;left:3717.7px;top:2034.7px;width:9.0px;height:2.9px;background:#8fa3cc;border-radius:1px"></div><div style="position:absolute;left:3724.6px;top:2026.7px;width:2.7px;height:5.7px;background:#8fa3cc"></div>
<div style="position:absolute;left:3767px;top:2016px;width:217px;height:64px;border:2px solid #023a8a;border-radius:10px;box-sizing:border-box"></div>
<svg style="position:absolute;left:3791px;top:2036px;" width="28" height="24" viewBox="0 0 28 24" fill="none"><rect x="1.3" y="1.3" width="25.4" height="21.4" rx="2" stroke="#023a8a" stroke-width="2.6"/><rect x="1" y="5.5" width="26" height="5" fill="#023a8a"/></svg>
<div class="t" style="left:3830.0px;top:2031.6px;font-size:30px;font-weight:700;color:#023a8a;transform:scaleX(0.9924);">sıua:ıouo</div><div style="position:absolute;left:3911.8px;top:2034.7px;width:9.0px;height:2.9px;background:#023a8a;border-radius:1px"></div>
<div style="position:absolute;left:608px;top:823px;width:3409px;height:264px;border:2px solid #ee3b1e;border-radius:9px;box-sizing:border-box"></div>
<div style="position:absolute;left:520px;top:2090px;width:3584px;height:58px;background:radial-gradient(ellipse 47% 100% at 44% 100%, rgba(0,0,0,0.13), rgba(0,0,0,0.075) 60%, rgba(0,0,0,0) 100%)"></div>
<div style="position:absolute;left:0px;top:0px;width:2px;height:2148px;background:rgba(255,255,255,0.13)"></div>
<div style="position:absolute;left:0px;top:2142px;width:6px;height:6px;background:radial-gradient(circle at 100% 0%, rgba(0,0,0,0) 5.5px, #000 6.5px)"></div>
<div style="position:absolute;left:4106px;top:2142px;width:6px;height:6px;background:radial-gradient(circle at 0% 0%, rgba(0,0,0,0) 5.5px, #000 6.5px)"></div>
<script>(function(){var w=window.innerWidth;if(w>0&&Math.abs(w-4112)>4){document.documentElement.style.zoom=w/4112;}})();</script>
</body></html>
